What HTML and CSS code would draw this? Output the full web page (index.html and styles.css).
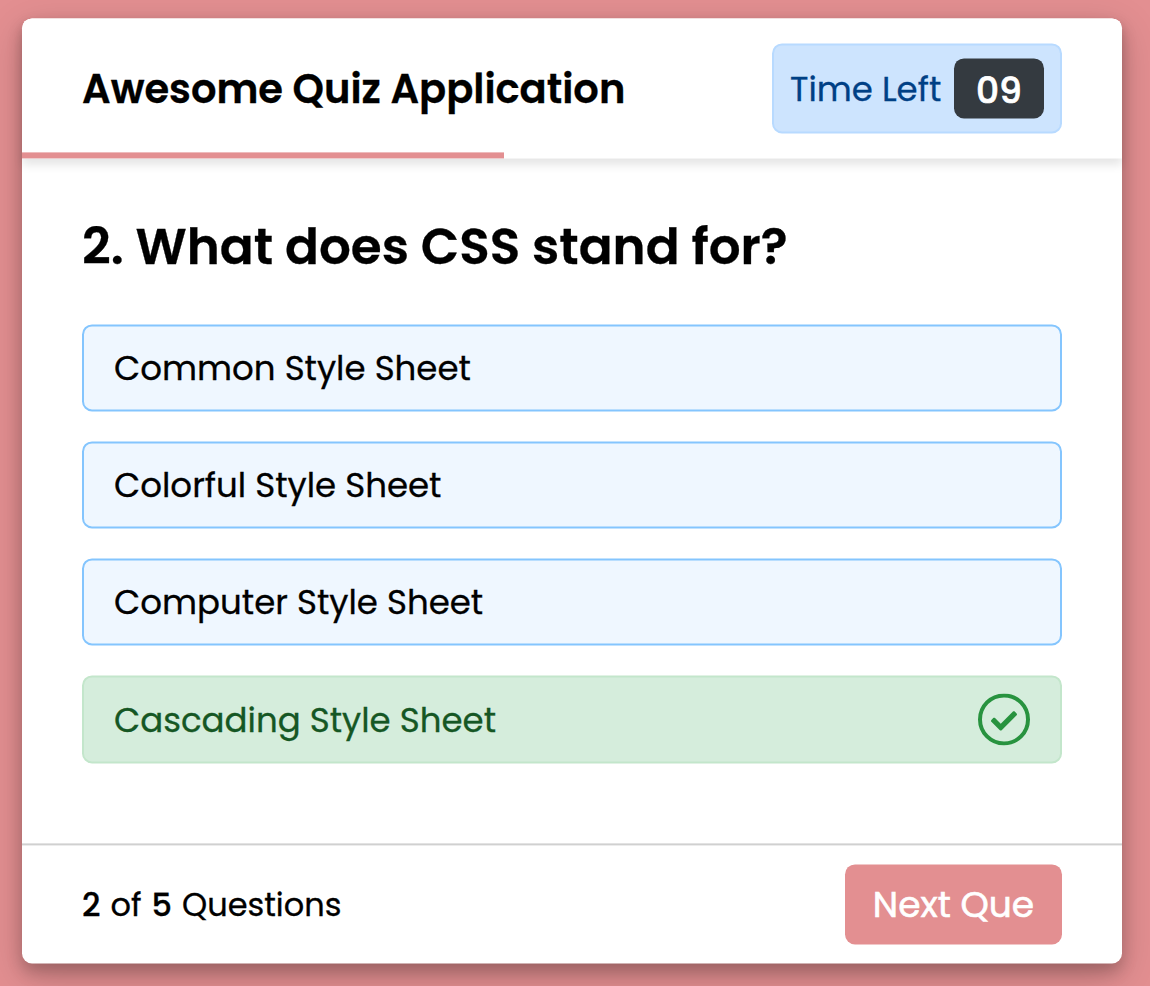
FILE: index.html
```html
<!DOCTYPE html>
<html lang="en">
<head>
<meta charset="utf-8">
<title>Awesome Quiz Application</title>
<link rel="stylesheet" href="styles.css">
</head>
<body>
<main class="quiz">
  <header class="quiz-header">
    <h1 class="title">Awesome Quiz Application</h1>
    <div class="timer">
      <span class="timer-label">Time Left</span>
      <span class="timer-seconds">09</span>
    </div>
    <div class="time-line"></div>
  </header>
  <section class="quiz-body">
    <h2 class="question">2. What does CSS stand for?</h2>
    <div class="options">
      <div class="option"><span>Common Style Sheet</span></div>
      <div class="option"><span>Colorful Style Sheet</span></div>
      <div class="option"><span>Computer Style Sheet</span></div>
      <div class="option correct"><span>Cascading Style Sheet</span>
        <svg class="tick" viewBox="0 0 52 52" width="52" height="52" aria-hidden="true">
          <circle cx="26" cy="26" r="24" fill="none" stroke="currentColor" stroke-width="4"/>
          <path transform="translate(13 14.5) scale(.05078)" fill="currentColor" d="M173.898 439.404l-166.4-166.4c-9.997-9.997-9.997-26.206 0-36.204l36.203-36.204c9.997-9.998 26.207-9.998 36.204 0L192 312.69 432.095 72.596c9.997-9.997 26.207-9.997 36.204 0l36.203 36.204c9.997 9.997 9.997 26.206 0 36.204l-294.4 294.401c-9.998 9.997-26.207 9.997-36.204-.001z"/>
        </svg>
      </div>
    </div>
  </section>
  <footer class="quiz-footer">
    <p class="count"><b>2</b><span>of</span><b>5</b><span>Questions</span></p>
    <button class="next">Next Que</button>
  </footer>
</main>
</body>
</html>
```
FILE: styles.css
```css
* { box-sizing: border-box; margin: 0; padding: 0; }

body {
  min-height: 986px;
  padding: 18px 28px 0 22px;
  overflow: hidden;
  background: #e38f91;
  color: #000;
  font-family: Poppins, Inter, "Open Sans", sans-serif;
  -webkit-text-stroke: .3px currentColor;
}

.quiz {
  width: 1100px;
  height: 945px;
  background: #fff;
  border-radius: 10px;
  box-shadow: 0 8px 16px rgba(0, 0, 0, .2), 0 12px 40px rgba(0, 0, 0, .19);
  transform: translateY(.4px);
}

.quiz-header {
  position: relative;
  height: 140px;
  padding: 0 60px;
  display: flex;
  align-items: center;
  justify-content: space-between;
  background: #fff;
  border-radius: 10px 10px 0 0;
  box-shadow: 0 6px 10px rgba(0, 0, 0, .1);
}

.title { padding-top: 2px; font-size: 40px; font-weight: 600; line-height: 60px; white-space: nowrap; }

.timer {
  width: 290px;
  height: 90px;
  padding: 0 16px;
  display: flex;
  align-items: center;
  justify-content: space-between;
  background: #cde4fe;
  border: 2px solid #b8daff;
  border-radius: 10px;
  color: #004085;
}

.timer-label { padding-top: 2px; font-size: 34px; white-space: nowrap; }

.timer-seconds {
  width: 90px;
  height: 60px;
  line-height: 66px;
  background: #343a40;
  border-radius: 10px;
  color: #fff;
  font-size: 36px;
  font-weight: 500;
  text-align: center;
  -webkit-text-stroke: .7px #fff;
}

.time-line {
  position: absolute;
  left: 0;
  bottom: 0;
  width: 482px;
  height: 6px;
  background: #e38f91;
}

.quiz-body { height: 685px; padding: 51px 60px 0; }

.question { font-size: 50px; font-weight: 600; line-height: 75px; white-space: nowrap; }

.options { padding-top: 40px; display: flex; flex-direction: column; gap: 30px; }

.option {
  height: 87px;
  padding: 0 30px;
  display: flex;
  align-items: center;
  justify-content: space-between;
  background: #eff7ff;
  border: 2px solid #84c5fe;
  border-radius: 10px;
  font-size: 34px;
  white-space: nowrap;
}

.option span { padding-top: 2px; }

.correct { height: 88px; background: #d5eddc; border-color: #c3e6cb; color: #155724; }

.tick { color: #28933f; }

.quiz-footer {
  height: 120px;
  padding: 0 60px;
  display: flex;
  align-items: center;
  justify-content: space-between;
  border-top: 2px solid #d0d0d0;
}

.count { padding-top: 2px; display: flex; gap: 10px; font-size: 32px; }
.count b { font-weight: 500; }

.next {
  width: 217px;
  height: 80px;
  border: 0;
  border-radius: 10px;
  background: #e38f91;
  color: #fff;
  font: inherit;
  font-size: 36px;
  -webkit-text-stroke: .6px #fff;
}
```
